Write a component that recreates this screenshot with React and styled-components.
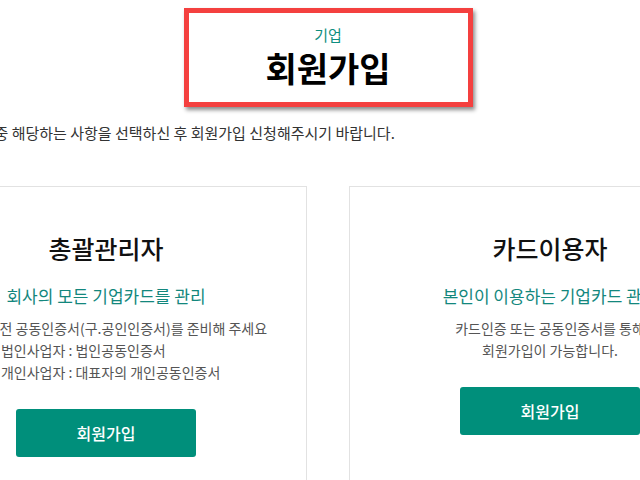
import styled, { createGlobalStyle } from "styled-components";

const GlobalStyle = createGlobalStyle`
    html, body {
        margin: 0;
        padding: 0;
        background: #fff;
        overflow: hidden;
    }
    body {
        font-family: "Noto Sans CJK KR", "Noto Sans", sans-serif;
        color: #222;
    }
`

const Page = styled.div`
    width: 846px;
    margin-left: -95px;
    padding-top: 8px;
    display: flex;
    flex-direction: column;
    align-items: center;
`
const TitleBox = styled.div`
    box-sizing: border-box;
    width: 289px;
    height: 99px;
    border: 5px solid #f4403f;
    box-shadow: 2px 3px 4px rgba(0, 0, 0, 0.45);
    display: flex;
    flex-direction: column;
    align-items: center;
    padding-top: 12px;
`
const Eyebrow = styled.div`
    font-size: 15px;
    line-height: 20px;
    color: #0e8e80;
`
const Heading = styled.h1`
    margin: 2px 0 0;
    font-size: 34px;
    line-height: 42px;
    font-weight: 700;
    color: #000;
`
const Desc = styled.p`
    align-self: stretch;
    margin: 16px 0 0;
    padding-left: 0;
    font-size: 15px;
    line-height: 20px;
    color: #333;
    white-space: nowrap;
`
const Cards = styled.div`
    display: grid;
    grid-template-columns: 402px 402px;
    gap: 42px;
    margin-top: 43px;
`
const Card = styled.div`
    box-sizing: border-box;
    min-height: 320px;
    border: 1px solid #e2e2e2;
    padding-top: 43px;
    display: flex;
    flex-direction: column;
    align-items: center;
`
const CardTitle = styled.h2`
    margin: 0;
    font-size: 25px;
    line-height: 36px;
    font-weight: 500;
    color: #111;
`
const Lead = styled.div`
    margin-top: 18px;
    font-size: 17px;
    line-height: 24px;
    color: #13877d;
    white-space: nowrap;
`
const Notes = styled.div`
    margin-top: 9px;
    font-size: 14px;
    line-height: 22px;
    color: #555;
    text-align: ${(p) => (p.left ? "left" : "center")};
    white-space: nowrap;
`
const SubNote = styled.div`
    padding-left: 56px;
`
const JoinButton = styled.button`
    margin-top: 26px;
    width: 180px;
    height: 48px;
    border: 0;
    border-radius: 3px;
    background: #008f7b;
    color: #fff;
    font-family: inherit;
    font-size: 16px;
    font-weight: 500;
    cursor: pointer;
`

const App = () => {
    return (
        <>
            <GlobalStyle />
            <Page>
                <TitleBox>
                    <Eyebrow>기업</Eyebrow>
                    <Heading>회원가입</Heading>
                </TitleBox>
                <Desc>아래 회원유형 중 해당하는 사항을 선택하신 후 회원가입 신청해주시기 바랍니다.</Desc>
                <Cards>
                    <Card>
                        <CardTitle>총괄관리자</CardTitle>
                        <Lead>회사의 모든 기업카드를 관리</Lead>
                        <Notes left>
                            <div>회원가입 전 공동인증서(구.공인인증서)를 준비해 주세요</div>
                            <SubNote>법인사업자 : 법인공동인증서</SubNote>
                            <SubNote>개인사업자 : 대표자의 개인공동인증서</SubNote>
                        </Notes>
                        <JoinButton>회원가입</JoinButton>
                    </Card>
                    <Card>
                        <CardTitle>카드이용자</CardTitle>
                        <Lead>본인이 이용하는 기업카드 관리</Lead>
                        <Notes>
                            <div>카드인증 또는 공동인증서를 통해</div>
                            <div>회원가입이 가능합니다.</div>
                        </Notes>
                        <JoinButton>회원가입</JoinButton>
                    </Card>
                </Cards>
            </Page>
        </>
    )
}

export default App;
